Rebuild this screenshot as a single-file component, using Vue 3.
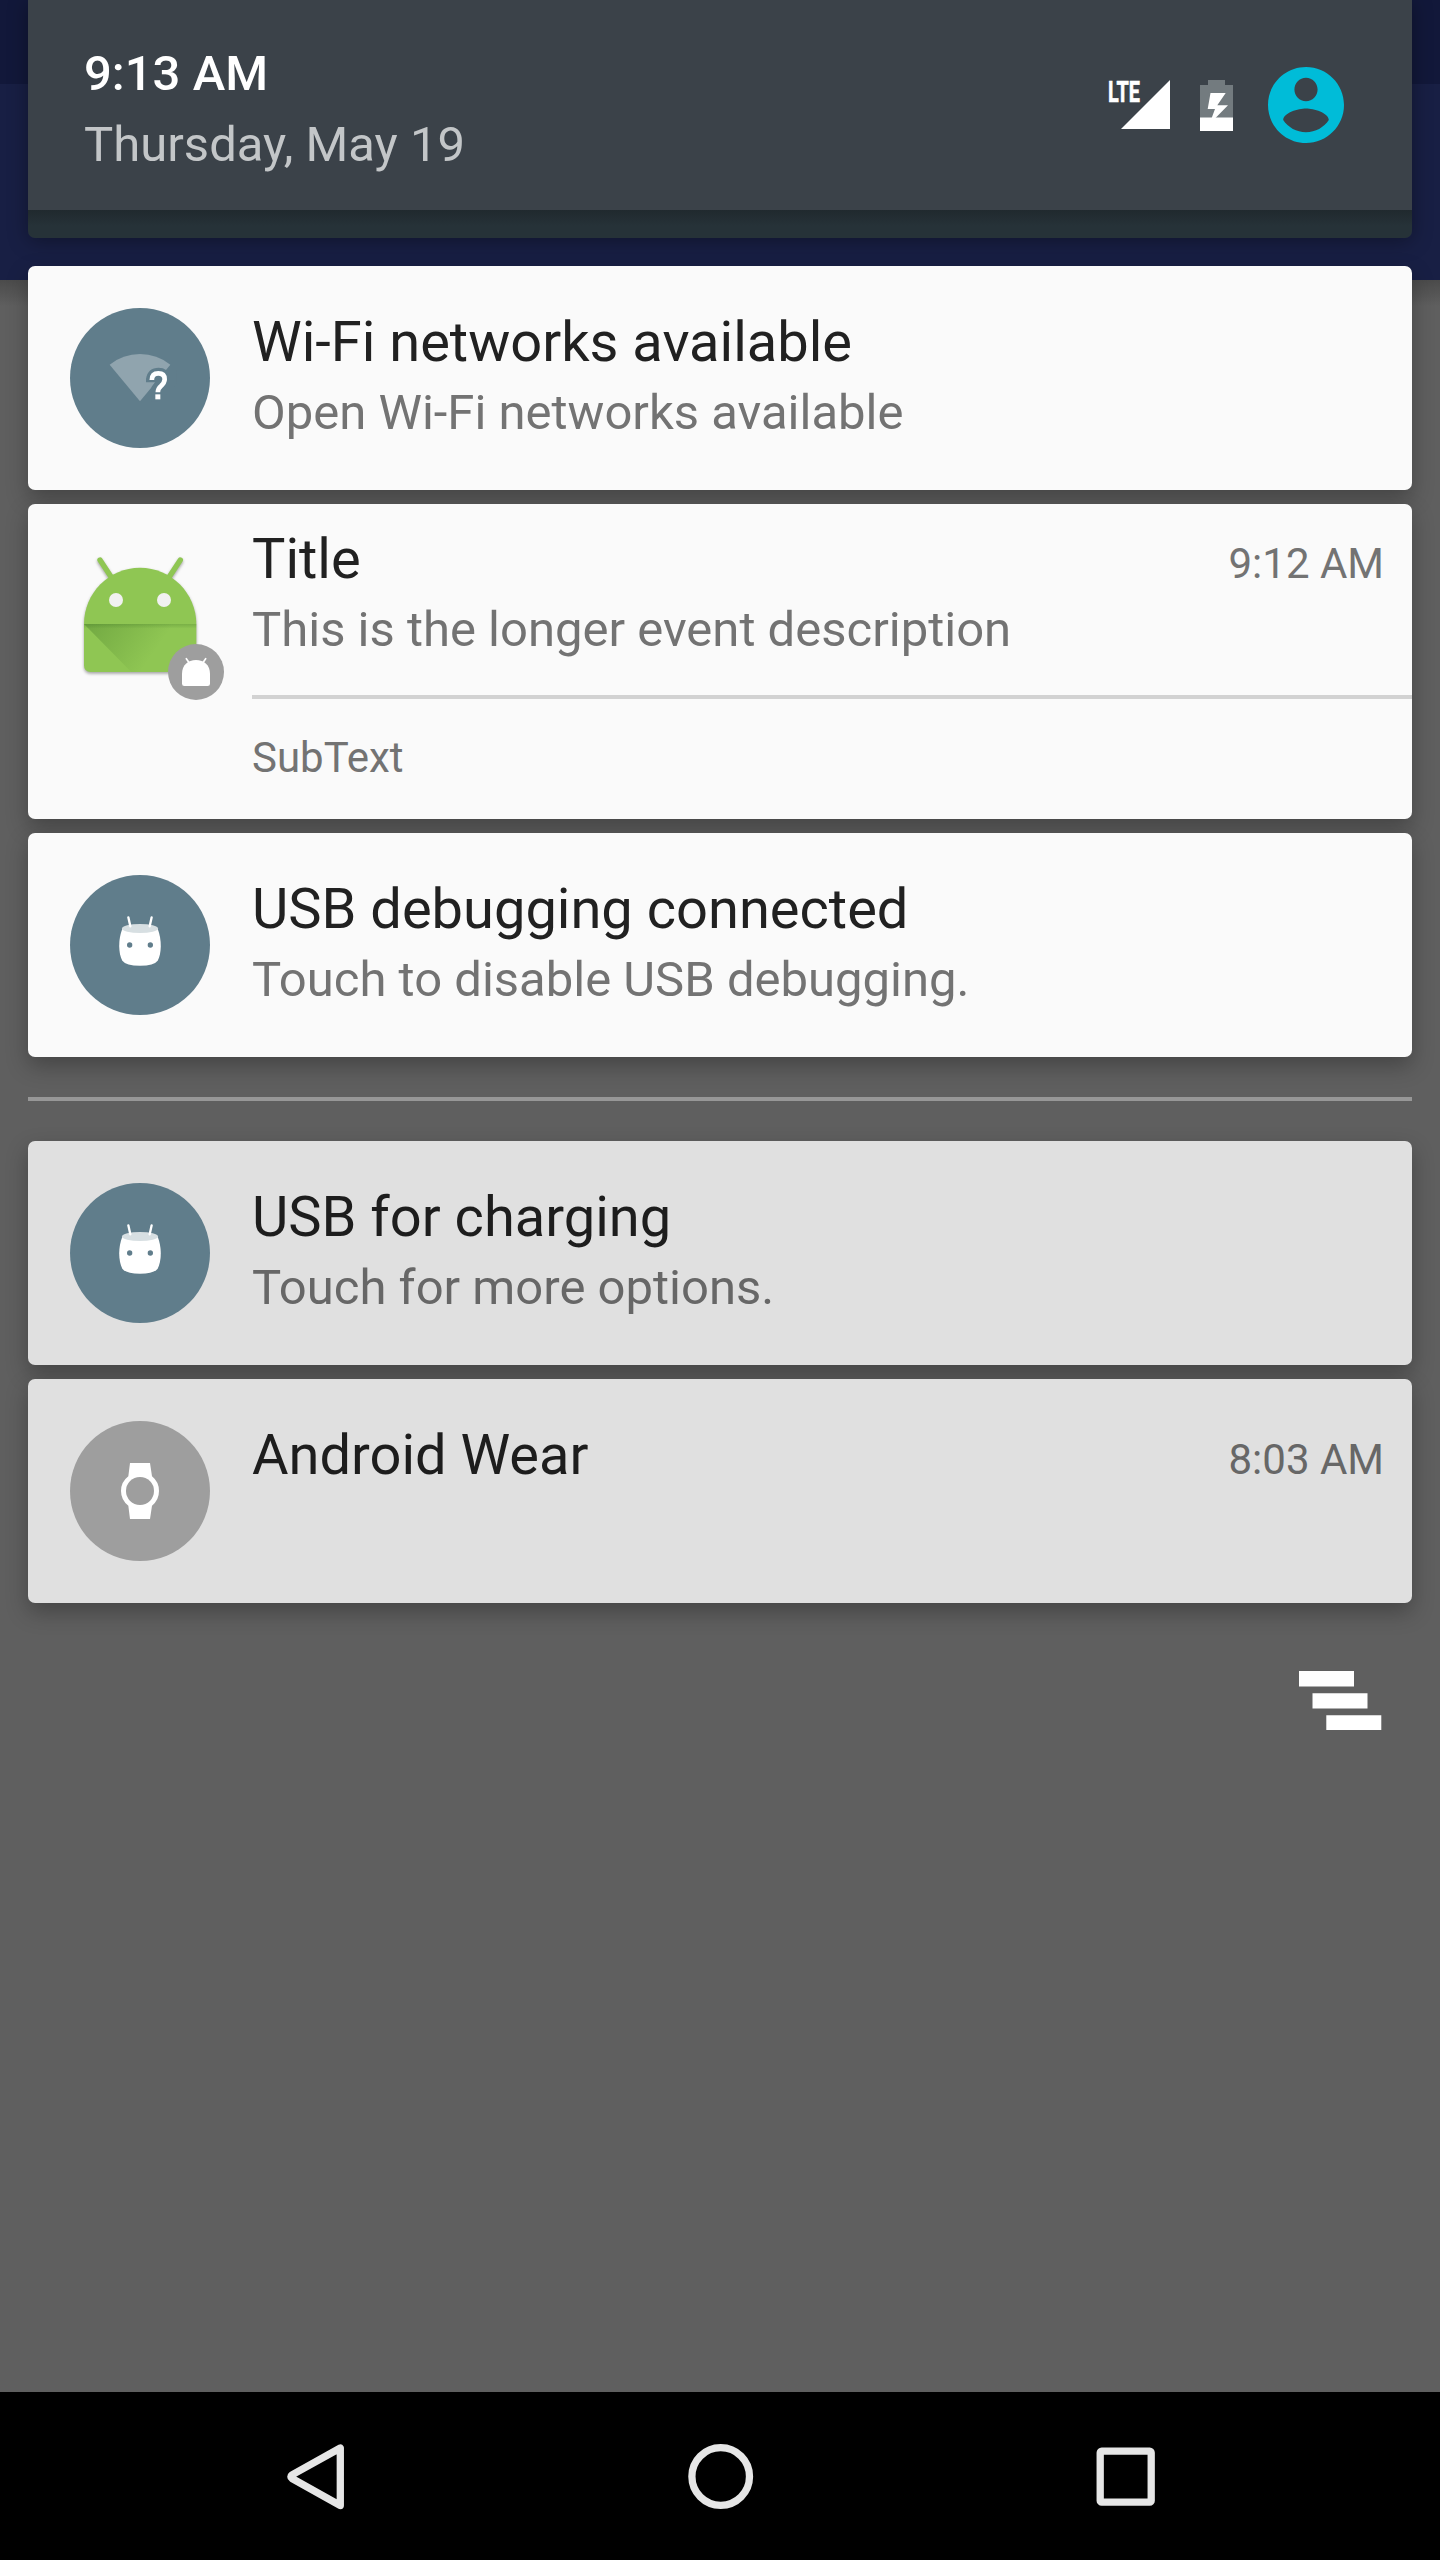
<script setup>
const notifications = [
  { id: 'wifi', icon: 'wifi', title: 'Wi-Fi networks available', text: 'Open Wi-Fi networks available' },
  { id: 'event', icon: 'launcher', title: 'Title', text: 'This is the longer event description', time: '9:12 AM', sub: 'SubText' },
  { id: 'debug', icon: 'usb', title: 'USB debugging connected', text: 'Touch to disable USB debugging.' },
]
const ambient = [
  { id: 'charging', icon: 'usb', title: 'USB for charging', text: 'Touch for more options.' },
  { id: 'wear', icon: 'watch', title: 'Android Wear', text: '', time: '8:03 AM' },
]
const groups = [
  { id: 'active', dim: false, items: notifications },
  { id: 'ambient', dim: true, items: ambient },
]
</script>

<template>
  <div class="screen">
    <main class="shade">
      <header class="header">
        <div class="header-main">
          <div class="clock">
            <div class="clock-time">9:13 AM</div>
            <div class="clock-date">Thursday, May 19</div>
          </div>
          <div class="status">
            <svg class="signal" viewBox="0 0 72 64" width="72" height="64">
              <text x="9" y="28.500" class="lte" textLength="32" lengthAdjust="spacingAndGlyphs">LTE</text>
              <path d="M22 56L71 7V56Z" fill="#fff" />
            </svg>
            <svg class="battery" viewBox="0 0 33 51" width="33" height="51">
              <path d="M8 0H25V5H33V38H0V5H8Z" fill="#737b7f" />
              <path d="M0 37.5H33V51H0Z" fill="#fff" />
              <path d="M10.5 13H25.7L17.3 25.2H28L14.5 39H11.3L15 29H7.7Z" fill="#fff" />
            </svg>
            <svg class="user" viewBox="2 2 20 20" width="76" height="76">
              <path fill="#00bcd8" fill-rule="evenodd" d="M12 2C6.48 2 2 6.48 2 12s4.48 10 10 10 10-4.48 10-10S17.52 2 12 2zm0 2.8c1.7 0 3.05 1.4 3.05 3.1s-1.35 3.1-3.05 3.1-3.05-1.4-3.05-3.1S10.3 4.8 12 4.8zm0 14.4c-2.5 0-4.71-1.28-6-3.22.03-1.99 4-3.08 6-3.08 1.99 0 5.97 1.09 6 3.08-1.29 1.94-3.5 3.22-6 3.22z" />
            </svg>
          </div>
        </div>
      </header>

      <section v-for="group in groups" :key="group.id" class="group" :class="{ dim: group.dim }">
        <article v-for="n in group.items" :key="n.id" class="card" :class="{ tall: n.sub }">
          <svg v-if="n.icon === 'wifi'" class="icon" viewBox="150 144 420 420">
            <circle cx="360" cy="354" r="210" fill="#607d8b" />
            <path d="M269 314Q309 282 360 282T451 314L360 424Z" fill="#90a4ae" />
            <path d="M378 367V357C381 334 395 323 416 323Q430 323 438 330L470 330V372L420 424H395V380L405 367Z" fill="#607d8b" />
            <path d="M395.500 360Q395.500 340 415 340Q434 340 434 358Q434 368 423 378Q413.500 386 413.500 397" fill="none" stroke="#fff" stroke-width="14" />
            <rect x="406" y="403" width="15" height="15" fill="#fff" />
          </svg>

          <svg v-else-if="n.icon === 'launcher'" class="icon" viewBox="30 48 420 420">
            <defs>
              <linearGradient id="fold" gradientUnits="userSpaceOnUse" x1="90" y1="282" x2="260" y2="400">
                <stop offset="0" stop-color="#33691e" stop-opacity=".3" />
                <stop offset="1" stop-color="#33691e" stop-opacity="0" />
              </linearGradient>
              <linearGradient id="crease" x1="0" y1="0" x2="0" y2="1">
                <stop offset="0" stop-color="#33691e" stop-opacity=".24" />
                <stop offset="1" stop-color="#33691e" stop-opacity="0" />
              </linearGradient>
            </defs>
            <g class="robot">
              <path d="M120 90L153 140M361 90L328 140" stroke="#8fc653" stroke-width="16" stroke-linecap="round" />
              <path d="M72 282C72 189 147 113 240 113S409 189 409 282V406Q409 426 389 426H92Q72 426 72 406Z" fill="#8fc653" />
            </g>
            <path d="M72 282H409V394L377 426H214Z" fill="url(#fold)" />
            <rect x="72" y="282" width="337" height="14" fill="url(#crease)" />
            <circle cx="168" cy="210" r="21" fill="#f1f1f1" />
            <circle cx="312" cy="210" r="21" fill="#f1f1f1" />
            <circle cx="408" cy="426" r="84" fill="#9e9e9e" />
            <path d="M379 386L388 399M437 386L428 399" stroke="#fff" stroke-width="5" stroke-linecap="round" />
            <path d="M366 432C366 405 384 390 408 390S450 405 450 432V461Q450 468 443 468H373Q366 468 366 461Z" fill="#fff" />
          </svg>

          <svg v-else-if="n.icon === 'usb'" class="icon" viewBox="30 45 420 420">
            <circle cx="240" cy="255" r="210" fill="#607d8b" />
            <path d="M187 206C174 238 175 280 187 302Q198 317 240 317T293 302C305 280 306 238 293 206Z" fill="#fff" />
            <ellipse cx="240" cy="205.500" rx="54" ry="13.500" fill="#d7dfe2" />
            <path d="M205 172L211 199M275 172L269 199" stroke="#fff" stroke-width="7" stroke-linecap="round" />
            <circle cx="209" cy="255" r="8" fill="#607d8b" />
            <circle cx="271" cy="255" r="8" fill="#607d8b" />
          </svg>

          <svg v-else class="icon" viewBox="30 63 420 420">
            <circle cx="240" cy="273" r="210" fill="#9e9e9e" />
            <path d="M210 189H270L276 229Q297 246 297 273T276 317L270 357H210L205 317Q183 300 183 273T205 229Z" fill="#fff" />
            <circle cx="240" cy="273" r="42" fill="#9e9e9e" />
          </svg>

          <div class="body">
            <div class="line">
              <h2 class="title">{{ n.title }}</h2>
              <time v-if="n.time" class="time">{{ n.time }}</time>
            </div>
            <p v-if="n.text" class="text">{{ n.text }}</p>
            <p v-if="n.sub" class="sub">{{ n.sub }}</p>
          </div>
        </article>
      </section>

      <div class="clear">
        <svg viewBox="0 0 83 59" width="83" height="59">
          <path d="M0 0H55V15.500H0ZM13.500 22.300H68.500V37.600H13.500ZM27.300 44.300H82.300V59H27.300Z" fill="#fff" />
        </svg>
      </div>
    </main>

    <nav class="nav">
      <svg viewBox="0 0 70 70" width="70" height="70">
        <path d="M60.300 7V64.500L12 37.500Q9.700 35.700 12 33.900Z" />
      </svg>
      <svg viewBox="0 0 70 70" width="70" height="70">
        <circle cx="35.700" cy="35.500" r="28.800" />
      </svg>
      <svg viewBox="0 0 70 70" width="70" height="70">
        <rect x="10.200" y="10.200" width="51" height="51" rx="1.500" />
      </svg>
    </nav>
  </div>
</template>

<style>
body {
  margin: 0;
}
</style>

<style scoped>
.screen {
  display: flex;
  flex-direction: column;
  width: 1440px;
  height: 2560px;
  overflow: hidden;
  font-family: Roboto, "Noto Sans", sans-serif;
  background:
    linear-gradient(#12183a 0 84px, #181f44 84px 280px, #4b4b4b 280px, #5f5f5f 306px);
}

.shade {
  flex: 1;
  padding: 0 28px;
}

.header {
  height: 238px;
  border-radius: 0 0 7px 7px;
  background: linear-gradient(#20292e 210px, #263238 226px);
  box-shadow: 0 3px 20px rgba(0, 0, 0, 0.35);
}

.header-main {
  display: flex;
  justify-content: space-between;
  box-sizing: border-box;
  height: 210px;
  padding: 45px 68px 0 56px;
  background: #3b4249;
}

.clock-time,
.clock-date {
  font-size: 49px;
  line-height: 58px;
  white-space: nowrap;
}

.clock-time {
  font-weight: 500;
  color: #fff;
}

.clock-date {
  margin-top: 13px;
  color: #c3c6c8;
}

.status {
  display: flex;
  align-items: center;
  height: 76px;
  margin-top: 22px;
}

.signal {
  overflow: visible;
}

.lte {
  font-family: Roboto, sans-serif;
  font-size: 29.500px;
  font-weight: 700;
  fill: #fff;
  stroke: #fff;
  stroke-width: 0.600;
}

.battery {
  margin-left: 29px;
}

.user {
  margin-left: 35px;
}

.group {
  display: flex;
  flex-direction: column;
  gap: 14px;
  margin-top: 28px;
}

.group.dim {
  margin-top: 40px;
  padding-top: 40px;
  border-top: 4px solid #979797;
}

.card {
  display: flex;
  box-sizing: border-box;
  height: 224px;
  padding-left: 42px;
  border-radius: 7px;
  background: #fafafa;
  box-shadow: 0 9px 22px rgba(0, 0, 0, 0.28);
}

.card.tall {
  height: 315px;
}

.dim .card {
  background: #e0e0e0;
}

.icon {
  flex: none;
  width: 140px;
  height: 140px;
  margin: 42px 42px 0 0;
  overflow: visible;
}

.robot {
  filter: drop-shadow(0 5px 4px rgba(0, 0, 0, 0.35));
}

.body {
  flex: 1;
  padding-top: 43px;
}

.tall .body {
  padding-top: 22px;
}

.line {
  display: flex;
  align-items: baseline;
  justify-content: space-between;
  height: 66px;
  padding-right: 28px;
}

.title {
  margin: 0;
  font-size: 56px;
  font-weight: 400;
  line-height: 66px;
  color: #212121;
}

.time {
  font-size: 42px;
  line-height: 50px;
  color: #737373;
}

.text {
  margin: 9px 0 0;
  font-size: 49px;
  line-height: 58px;
  color: #737373;
}

.sub {
  margin: 36px 0 0;
  padding-top: 34px;
  border-top: 4px solid #d2d2d2;
  font-size: 42px;
  line-height: 50px;
  color: #737373;
}

.dim .title {
  color: #1d1d1d;
}

.dim .text,
.dim .time {
  color: #676767;
}

.clear {
  display: flex;
  justify-content: flex-end;
  padding: 68px 30px 0 0;
}

.nav {
  display: flex;
  align-items: center;
  justify-content: space-between;
  box-sizing: border-box;
  height: 168px;
  padding: 0 280px;
  background: #000;
}

.nav path,
.nav circle,
.nav rect {
  fill: none;
  stroke: #e6e6e6;
  stroke-width: 7.300;
  stroke-linejoin: round;
}
</style>
